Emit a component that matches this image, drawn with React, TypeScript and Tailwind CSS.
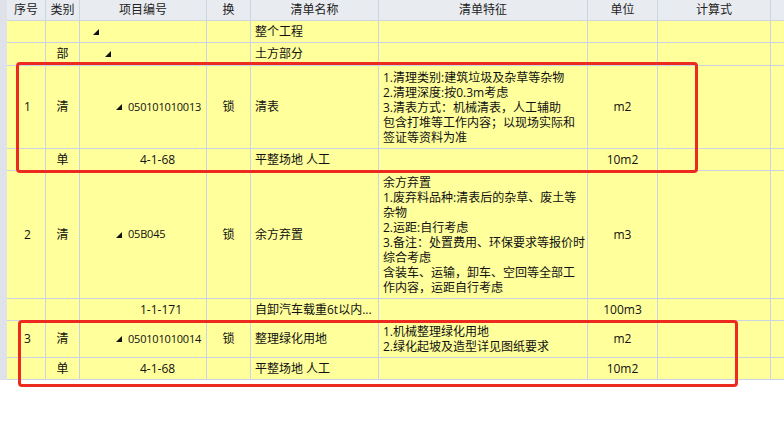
import React from 'react';

type Row = {
  h: string;
  seq?: string;
  cat?: string;
  code?: string;
  codePad: string;
  tri?: boolean;
  swap?: string;
  name?: string;
  feat?: string[];
  unit?: string;
};

const cols = ['w-[39px]', 'w-[34px]', 'w-[127px]', 'w-[44px]', 'w-[128px]', 'w-[209px]', 'w-[70px]', 'w-[113px]'];
const heads = ['序号', '类别', '项目编号', '换', '清单名称', '清单特征', '单位', '计算式'];

const rows: Row[] = [
  { h: 'h-[22px]', codePad: 'pl-[13px]', tri: true, name: '整个工程' },
  { h: 'h-[23px]', cat: '部', codePad: 'pl-[25px]', tri: true, name: '土方部分' },
  {
    h: 'h-[83px]',
    seq: '1',
    cat: '清',
    code: '050101010013',
    codePad: 'pl-[36px]',
    tri: true,
    swap: '锁',
    name: '清表',
    feat: [
      '1.清理类别:建筑垃圾及杂草等杂物',
      '2.清理深度:按0.3m考虑',
      '3.清表方式：机械清表，人工辅助',
      '包含打堆等工作内容；以现场实际和',
      '签证等资料为准',
    ],
    unit: 'm2',
  },
  { h: 'h-[22px]', cat: '单', code: '4-1-68', codePad: 'pl-[60px]', name: '平整场地 人工', unit: '10m2' },
  {
    h: 'h-[128px]',
    seq: '2',
    cat: '清',
    code: '05B045',
    codePad: 'pl-[36px]',
    tri: true,
    swap: '锁',
    name: '余方弃置',
    feat: [
      '余方弃置',
      '1.废弃料品种:清表后的杂草、废土等',
      '杂物',
      '2.运距:自行考虑',
      '3.备注：处置费用、环保要求等报价时',
      '综合考虑',
      '含装车、运输，卸车、空回等全部工',
      '作内容，运距自行考虑',
    ],
    unit: 'm3',
  },
  { h: 'h-[22px]', code: '1-1-171', codePad: 'pl-[60px]', name: '自卸汽车载重6t以内...', unit: '100m3' },
  {
    h: 'h-[37px]',
    seq: '3',
    cat: '清',
    code: '050101010014',
    codePad: 'pl-[36px]',
    tri: true,
    swap: '锁',
    name: '整理绿化用地',
    feat: ['1.机械整理绿化用地', '2.绿化起坡及造型详见图纸要求'],
    unit: 'm2',
  },
  { h: 'h-[22px]', cat: '单', code: '4-1-68', codePad: 'pl-[60px]', name: '平整场地 人工', unit: '10m2' },
];

function Tri() {
  return (
    <svg width="6" height="6" viewBox="0 0 6 6" className="shrink-0">
      <polygon points="6,0 6,6 0,6" fill="#111" />
    </svg>
  );
}

const cell = 'border-r border-b border-[#c9d5e4] flex items-center shrink-0';

export default function App() {
  return (
    <div
      className="relative w-[784px] h-[423px] bg-white overflow-hidden text-[12px] text-[#111]"
      style={{ fontFamily: '"Open Sans", "Noto Sans CJK SC", sans-serif' }}
    >
      <div className="flex">
        <div className="w-[7px] shrink-0 bg-[#dfe2e9] h-[380px]" />
        <div className="flex flex-col w-[777px]">
          {/* header */}
          <div className="flex h-[21px] bg-[#e8ebf0]">
            {heads.map((t, i) => (
              <div key={t} className={`${cols[i]} ${cell} justify-center border-[#cdd5df] text-[#222]`}>
                {t}
              </div>
            ))}
            <div className="flex-1 border-b border-[#cdd5df]" />
          </div>

          {rows.map((r, idx) => (
            <div key={idx} className={`flex ${r.h} bg-[#ffff9c]`}>
              <div className={`${cols[0]} ${cell} pl-[17px]`}>{r.seq}</div>
              <div className={`${cols[1]} ${cell} justify-center`}>{r.cat}</div>
              <div className={`${cols[2]} ${cell} ${r.codePad} gap-[6px]`}>
                {r.tri && <Tri />}
                {r.code && (
                  <span className={r.tri ? 'text-[11px] tracking-[-0.2px]' : ''}>{r.code}</span>
                )}
              </div>
              <div className={`${cols[3]} ${cell} justify-center`}>{r.swap}</div>
              <div className={`${cols[4]} ${cell} pl-[4px] whitespace-nowrap`}>{r.name}</div>
              <div className={`${cols[5]} ${cell} pl-[4px]`}>
                {r.feat && (
                  <div className="flex flex-col leading-[15px] whitespace-nowrap">
                    {r.feat.map((l) => (
                      <span key={l}>{l}</span>
                    ))}
                  </div>
                )}
              </div>
              <div className={`${cols[6]} ${cell} justify-center`}>{r.unit}</div>
              <div className={`${cols[7]} ${cell}`} />
              <div className="flex-1 border-b border-[#c9d5e4]" />
            </div>
          ))}
        </div>
      </div>

      {/* red highlight boxes */}
      <div className="absolute left-[16px] top-[62px] w-[682px] h-[111px] border-[3px] border-[#ec2a1f] rounded-[4px]" />
      <div className="absolute left-[18px] top-[320px] w-[720px] h-[67px] border-[3px] border-[#ec2a1f] rounded-[4px]" />
    </div>
  );
}
